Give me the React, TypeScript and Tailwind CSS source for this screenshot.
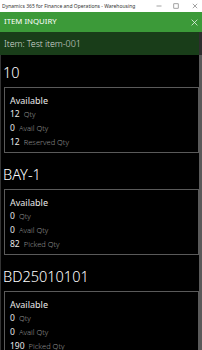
import React from "react";

interface QtyRow {
  value: string;
  label: string;
}

interface LocationInfo {
  name: string;
  rows: QtyRow[];
}

const locations: LocationInfo[] = [
  {
    name: "10",
    rows: [
      { value: "12", label: "Qty" },
      { value: "0", label: "Avail Qty" },
      { value: "12", label: "Reserved Qty" },
    ],
  },
  {
    name: "BAY-1",
    rows: [
      { value: "0", label: "Qty" },
      { value: "0", label: "Avail Qty" },
      { value: "82", label: "Picked Qty" },
    ],
  },
  {
    name: "BD25010101",
    rows: [
      { value: "0", label: "Qty" },
      { value: "0", label: "Avail Qty" },
      { value: "190", label: "Picked Qty" },
    ],
  },
];

// ウィンドウのタイトルバー
const TitleBar: React.FC = () => (
  <div className="flex h-[12px] items-center bg-white pl-[2px] text-[#333]">
    <span className="flex-1 truncate text-[5px] leading-[12px]">
      Dynamics 365 for Finance and Operations - Warehousing
    </span>
    <div className="flex items-center">
      <svg width="6" height="6" viewBox="0 0 6 6" className="mr-[11px]">
        <line x1="0.5" y1="3" x2="5.5" y2="3" stroke="#666" strokeWidth="0.6" />
      </svg>
      <svg width="6" height="6" viewBox="0 0 6 6" className="mr-[13px]">
        <rect x="0.8" y="0.8" width="4.4" height="4.4" fill="none" stroke="#666" strokeWidth="0.6" />
      </svg>
      <svg width="6" height="6" viewBox="0 0 6 6" className="mr-[4px]">
        <path d="M0.8 0.8 L5.2 5.2 M5.2 0.8 L0.8 5.2" stroke="#666" strokeWidth="0.6" />
      </svg>
    </div>
  </div>
);

const LocationCard: React.FC<{ location: LocationInfo }> = ({ location }) => (
  <div className="pb-[4px] pl-[3px] pt-[6px]">
    <div className="-ml-[1px] text-[14.5px] font-light leading-[22px] text-white">
      {location.name}
    </div>
    <div className="mt-[4px] border border-[#5a5a5a] pb-[3px] pl-[5px] pt-[6px]">
      <div className="text-[9px] leading-[13px] text-[#e8e8e8]">Available</div>
      {location.rows.map((row) => (
        <div key={row.label} className="flex items-baseline gap-[4px] leading-[14px]">
          <span className="text-[8.5px] text-[#e8e8e8]">{row.value}</span>
          <span className="text-[7.5px] font-light text-[#8f8f8f]">{row.label}</span>
        </div>
      ))}
    </div>
  </div>
);

export default function App() {
  return (
    <div className="h-[350px] w-[202px] overflow-hidden bg-black font-['Noto_Sans','Open_Sans',sans-serif]">
      <TitleBar />

      {/* ヘッダー */}
      <div className="flex h-[20px] items-center justify-between bg-[#3c9a39] pl-[4px] pr-[4px]">
        <span className="text-[7.8px] text-white">ITEM INQUIRY</span>
        <svg width="7" height="7" viewBox="0 0 7 7">
          <path d="M0.6 0.6 L6.4 6.4 M6.4 0.6 L0.6 6.4" stroke="#e6f2e6" strokeWidth="0.8" />
        </svg>
      </div>

      <div className="flex">
        <div className="flex-1">
          {/* アイテム名 */}
          <div className="flex h-[23px] items-center bg-[#193d19] pl-[4px]">
            <span className="text-[9px] font-light tracking-[-0.1px] text-[#d6dcd6]">
              Item: Test item-001
            </span>
          </div>

          {/* ロケーション一覧 */}
          <div className="border-l border-[#333]">
            {locations.map((loc) => (
              <LocationCard key={loc.name} location={loc} />
            ))}
          </div>
        </div>

        {/* スクロールバー */}
        <div className="flex w-[3px] flex-col">
          <div className="h-[23px] bg-[#2e2e2e]" />
          <div className="h-[300px] bg-[#5a5a5a]" />
        </div>
      </div>
    </div>
  );
}
